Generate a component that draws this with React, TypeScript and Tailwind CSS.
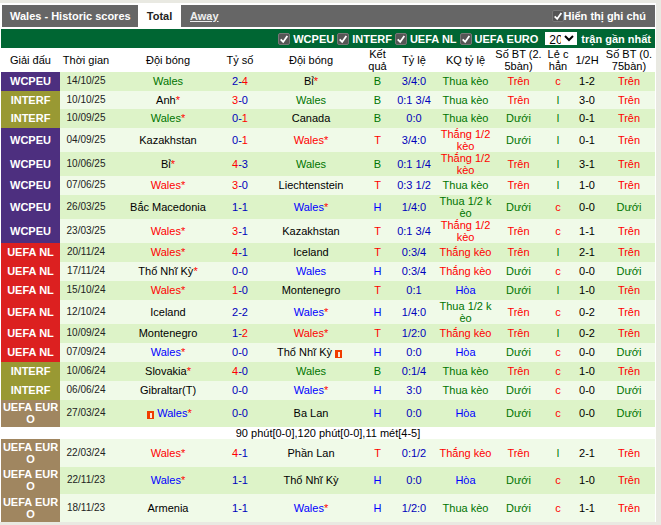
import { Fragment } from 'react';

type Tone = 'black' | 'green' | 'red' | 'blue';

interface Match {
  league: 'WCPEU' | 'INTERF' | 'UEFA NL' | 'UEFA EURO';
  date: string;
  home: string;
  homeTone: Tone;
  score: string;
  away: string;
  awayTone: Tone;
  result: 'B' | 'T' | 'H';
  odds: string;
  oddsResult: string;
  goals: string;
  oddEven: string;
  half: string;
  goals75: string;
  height: string;
  card?: 'home' | 'away';
  note?: string;
}

const toneClass: Record<Tone, string> = {
  black: 'text-black',
  green: 'text-[#007400]',
  red: 'text-[#ff0000]',
  blue: 'text-[#0000ff]',
};

const leagueClass = {
  WCPEU: 'bg-[#4d2f7f]',
  INTERF: 'bg-[#999933]',
  'UEFA NL': 'bg-[#dc2020]',
  'UEFA EURO': 'bg-[#a08660]',
};

const m = (
  league: Match['league'],
  date: string,
  home: string,
  homeTone: Tone,
  score: string,
  away: string,
  awayTone: Tone,
  result: Match['result'],
  odds: string,
  oddsResult: string,
  goals: string,
  oddEven: string,
  half: string,
  goals75: string,
  height: string,
  extra: Partial<Match> = {},
): Match => ({ league, date, home, homeTone, score, away, awayTone, result, odds, oddsResult, goals, oddEven, half, goals75, height, ...extra });

const matches: Match[] = [
  m('WCPEU', '14/10/25', 'Wales', 'green', '2-4', 'Bỉ*', 'black', 'B', '3/4:0', 'Thua kèo', 'Trên', 'c', '1-2', 'Trên', 'h-[19px]'),
  m('INTERF', '10/10/25', 'Anh*', 'black', '3-0', 'Wales', 'green', 'B', '0:1 3/4', 'Thua kèo', 'Trên', 'l', '3-0', 'Trên', 'h-[18px]'),
  m('INTERF', '10/09/25', 'Wales*', 'green', '0-1', 'Canada', 'black', 'B', '0:0', 'Thua kèo', 'Dưới', 'l', '0-1', 'Trên', 'h-[19px]'),
  m('WCPEU', '04/09/25', 'Kazakhstan', 'black', '0-1', 'Wales*', 'red', 'T', '3/4:0', 'Thắng 1/2 kèo', 'Dưới', 'l', '0-1', 'Trên', 'h-[24px]'),
  m('WCPEU', '10/06/25', 'Bỉ*', 'black', '4-3', 'Wales', 'green', 'B', '0:1 1/4', 'Thắng 1/2 kèo', 'Trên', 'l', '3-1', 'Trên', 'h-[24px]'),
  m('WCPEU', '07/06/25', 'Wales*', 'red', '3-0', 'Liechtenstein', 'black', 'T', '0:3 1/2', 'Thua kèo', 'Trên', 'l', '1-0', 'Trên', 'h-[19px]'),
  m('WCPEU', '26/03/25', 'Bắc Macedonia', 'black', '1-1', 'Wales*', 'blue', 'H', '1/4:0', 'Thua 1/2 kèo', 'Dưới', 'c', '0-0', 'Dưới', 'h-[24px]'),
  m('WCPEU', '23/03/25', 'Wales*', 'red', '3-1', 'Kazakhstan', 'black', 'T', '0:1 3/4', 'Thắng 1/2 kèo', 'Trên', 'c', '1-1', 'Trên', 'h-[24px]'),
  m('UEFA NL', '20/11/24', 'Wales*', 'red', '4-1', 'Iceland', 'black', 'T', '0:3/4', 'Thắng kèo', 'Trên', 'l', '2-1', 'Trên', 'h-[19px]'),
  m('UEFA NL', '17/11/24', 'Thổ Nhĩ Kỳ*', 'black', '0-0', 'Wales', 'blue', 'H', '0:3/4', 'Thắng kèo', 'Dưới', 'c', '0-0', 'Dưới', 'h-[19px]'),
  m('UEFA NL', '15/10/24', 'Wales*', 'red', '1-0', 'Montenegro', 'black', 'T', '0:1', 'Hòa', 'Dưới', 'l', '1-0', 'Trên', 'h-[19px]'),
  m('UEFA NL', '12/10/24', 'Iceland', 'black', '2-2', 'Wales*', 'blue', 'H', '1/4:0', 'Thua 1/2 kèo', 'Trên', 'c', '0-2', 'Trên', 'h-[24px]'),
  m('UEFA NL', '10/09/24', 'Montenegro', 'black', '1-2', 'Wales*', 'red', 'T', '1/2:0', 'Thắng kèo', 'Trên', 'l', '0-2', 'Trên', 'h-[19px]'),
  m('UEFA NL', '07/09/24', 'Wales*', 'blue', '0-0', 'Thổ Nhĩ Kỳ', 'black', 'H', '0:0', 'Hòa', 'Dưới', 'c', '0-0', 'Dưới', 'h-[19px]', { card: 'away' }),
  m('INTERF', '10/06/24', 'Slovakia*', 'black', '4-0', 'Wales', 'green', 'B', '0:1/4', 'Thua kèo', 'Trên', 'c', '1-0', 'Trên', 'h-[19px]'),
  m('INTERF', '06/06/24', 'Gibraltar(T)', 'black', '0-0', 'Wales*', 'blue', 'H', '3:0', 'Thua kèo', 'Dưới', 'c', '0-0', 'Dưới', 'h-[19px]'),
  m('UEFA EURO', '27/03/24', 'Wales*', 'blue', '0-0', 'Ba Lan', 'black', 'H', '0:0', 'Hòa', 'Dưới', 'c', '0-0', 'Dưới', 'h-[27px]', {
    card: 'home',
    note: '90 phút[0-0],120 phút[0-0],11 mét[4-5]',
  }),
  m('UEFA EURO', '22/03/24', 'Wales*', 'red', '4-1', 'Phần Lan', 'black', 'T', '0:1/2', 'Thắng kèo', 'Trên', 'l', '2-1', 'Trên', 'h-[28px]'),
  m('UEFA EURO', '22/11/23', 'Wales*', 'blue', '1-1', 'Thổ Nhĩ Kỳ', 'black', 'H', '0:0', 'Hòa', 'Dưới', 'c', '1-0', 'Trên', 'h-[27px]'),
  m('UEFA EURO', '18/11/23', 'Armenia', 'black', '1-1', 'Wales*', 'blue', 'H', '1/2:0', 'Thua kèo', 'Dưới', 'c', '1-1', 'Trên', 'h-[28px]'),
];

const headers = [
  'Giải đấu', 'Thời gian', 'Đội bóng', 'Tỷ số', 'Đội bóng', 'Kết quả', 'Tỷ lệ',
  'KQ tỷ lệ', 'Số BT (2. 5bàn)', 'Lẻ c hẳn', '1/2H', 'Số BT (0. 75bàn)',
];

const filters = ['WCPEU', 'INTERF', 'UEFA NL', 'UEFA EURO'];

function Tick() {
  return (
    <span className="flex h-[12px] w-[12px] items-center justify-center rounded-[2px] border border-[#777] bg-[#555]">
      <svg viewBox="0 0 12 12" className="h-[10px] w-[10px]" fill="none" stroke="white" strokeWidth="2.2">
        <path d="M2 6.5 L5 9.5 L10 2.5" />
      </svg>
    </span>
  );
}

function RedCard() {
  return (
    <span className="mx-[3px] inline-flex h-[8px] w-[7px] items-center justify-center bg-[#f03c00] align-[-0.5px]">
      <span className="h-[5px] w-[2px] bg-[#ffe8d8]" />
    </span>
  );
}

function Team({ name, tone, card }: { name: string; tone: Tone; card: boolean }) {
  const star = name.endsWith('*');
  return (
    <span className={toneClass[tone]}>
      {card && tone !== 'black' && <RedCard />}
      {star ? name.slice(0, -1) : name}
      {star && <span className="text-[#ff0000]">*</span>}
      {card && tone === 'black' && <RedCard />}
    </span>
  );
}

function Score({ value }: { value: string }) {
  const [a, b] = value.split('-');
  const blue = 'text-[#0000bb]';
  const red = 'text-[#ff0000]';
  if (Number(a) > Number(b)) {
    return (
      <>
        <span className={red}>{a}</span>
        <span className={blue}>-{b}</span>
      </>
    );
  }
  if (Number(b) > Number(a)) {
    return (
      <>
        <span className={blue}>{a}-</span>
        <span className={red}>{b}</span>
      </>
    );
  }
  return <span className={blue}>{value}</span>;
}

const resultClass = { B: 'text-[#007400]', T: 'text-[#ff0000]', H: 'text-[#0000ff]' };

function oddsResultClass(v: string) {
  if (v.startsWith('Thua')) return 'text-[#007400]';
  if (v.startsWith('Thắng')) return 'text-[#ff0000]';
  return 'text-[#0000ff]';
}

function goalsClass(v: string) {
  return v === 'Trên' ? 'text-[#ff0000]' : 'text-[#007400]';
}

export default function App() {
  let shade = true;
  return (
    <div className="min-h-screen bg-[#e9e9e2] pt-[3px] font-['Liberation_Sans',Arial,sans-serif] text-[11px] leading-[12px]">
      <div className="w-[656px] bg-white pl-[1px] pr-[1px] pt-[2px]">
        <div className="ml-[1px] flex h-[22px] items-center bg-[#666] font-bold text-white">
          <span className="ml-[8px] w-[128px]">Wales - Historic scores</span>
          <span className="flex h-full w-[43px] items-center justify-center bg-white text-[#222]">Total</span>
          <span className="ml-[9px] text-[#eee] underline">Away</span>
          <label className="ml-auto mr-[9px] flex items-center">
            <Tick />
            Hiển thị ghi chú
          </label>
        </div>
        <div className="mt-[2px] flex h-[19px] items-center justify-end gap-[3px] bg-[#006633] pr-[4px] font-bold text-white">
          {filters.map((f) => (
            <label key={f} className="flex items-center gap-[3px]">
              <Tick />
              {f}
            </label>
          ))}
          <select
            defaultValue="20"
            className="ml-[4px] h-[13px] w-[32px] bg-white text-[12px] leading-[12px] font-normal text-black"
          >
            <option value="20">20</option>
          </select>
          <span className="ml-[1px]">trận gần nhất</span>
        </div>
        <table className="w-[654px] table-fixed border-collapse text-center">
          <colgroup>
            <col className="w-[59px]" />
            <col className="w-[52px]" />
            <col className="w-[112px]" />
            <col className="w-[32px]" />
            <col className="w-[110px]" />
            <col className="w-[23px]" />
            <col className="w-[50px]" />
            <col className="w-[53px]" />
            <col className="w-[53px]" />
            <col className="w-[26px]" />
            <col className="w-[32px]" />
            <col className="w-[52px]" />
          </colgroup>
          <thead>
            <tr className="h-[24px] text-black">
              {headers.map((h, i) => (
                <th key={i} className="break-all p-0 font-normal">
                  {h}
                </th>
              ))}
            </tr>
          </thead>
          <tbody>
            {matches.map((r) => {
              const bg = shade ? 'bg-[#ddf3c8]' : 'bg-[#f0fae8]';
              shade = r.note ? false : !shade;
              // two-line cells fill the 24px rows, so no bottom nudge there
              const cell = r.height === 'h-[24px]' ? 'p-0' : 'p-0 pb-[1px]';
              return (
                <Fragment key={r.date}>
                  <tr className={`${r.height} ${bg}`}>
                    <td className={`break-all font-bold text-white ${cell} ${leagueClass[r.league]}`}>{r.league}</td>
                    <td className={`text-[10px] text-[#222] ${cell}`}>{r.date}</td>
                    <td className={cell}>
                      <Team name={r.home} tone={r.homeTone} card={r.card === 'home'} />
                    </td>
                    <td className={cell}>
                      <Score value={r.score} />
                    </td>
                    <td className={cell}>
                      <Team name={r.away} tone={r.awayTone} card={r.card === 'away'} />
                    </td>
                    <td className={`${cell} ${resultClass[r.result]}`}>{r.result}</td>
                    <td className={`text-[#0000bb] ${cell}`}>{r.odds}</td>
                    <td className={`break-all ${cell} ${oddsResultClass(r.oddsResult)}`}>{r.oddsResult}</td>
                    <td className={`${cell} ${goalsClass(r.goals)}`}>{r.goals}</td>
                    <td className={`${cell} ${r.oddEven === 'c' ? 'text-[#ff0000]' : 'text-[#007400]'}`}>{r.oddEven}</td>
                    <td className={`text-black ${cell}`}>{r.half}</td>
                    <td className={`${cell} ${goalsClass(r.goals75)}`}>{r.goals75}</td>
                  </tr>
                  {r.note && (
                    <tr className="h-[12px] bg-white">
                      <td colSpan={12} className="p-0 text-black">
                        {r.note}
                      </td>
                    </tr>
                  )}
                </Fragment>
              );
            })}
          </tbody>
        </table>
      </div>
    </div>
  );
}
